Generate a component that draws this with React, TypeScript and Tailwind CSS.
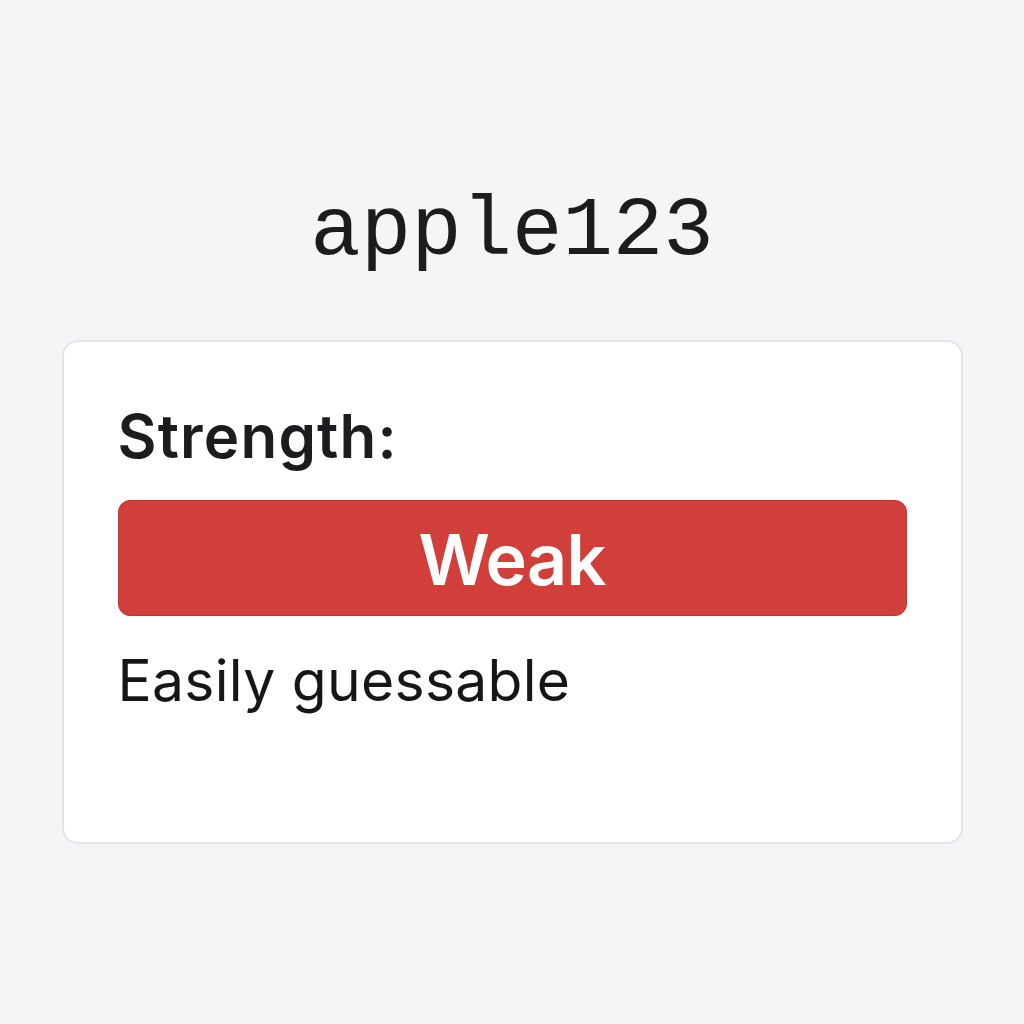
export default function App() {
  return (
    <div className="min-h-screen w-full bg-[#f5f5f7] flex flex-col items-center">
      {/* password being checked */}
      <h1 className="mt-[190px] text-[84px] leading-none text-[#1c1c1e] font-['Liberation_Mono',monospace]">
        apple123
      </h1>

      <div className="mt-[66px] w-[901px] h-[504px] bg-white rounded-2xl border-2 border-[#e4e4e8] px-[54px] pt-[64px] font-['Inter',sans-serif]">
        <div className="text-[60px] leading-none font-semibold text-[#1c1c1e] tracking-[0.02em]">
          Strength:
        </div>
        <div className="mt-[34px] h-[116px] rounded-xl bg-[#d13f3b] border border-[#c8302c] flex items-center justify-center">
          <span className="pt-[4px] text-white text-[70px] leading-none font-semibold tracking-[-0.01em]">Weak</span>
        </div>
        <div className="mt-[36px] text-[57px] leading-none text-[#161618] tracking-[0.005em]">
          Easily guessable
        </div>
      </div>
    </div>
  );
}
